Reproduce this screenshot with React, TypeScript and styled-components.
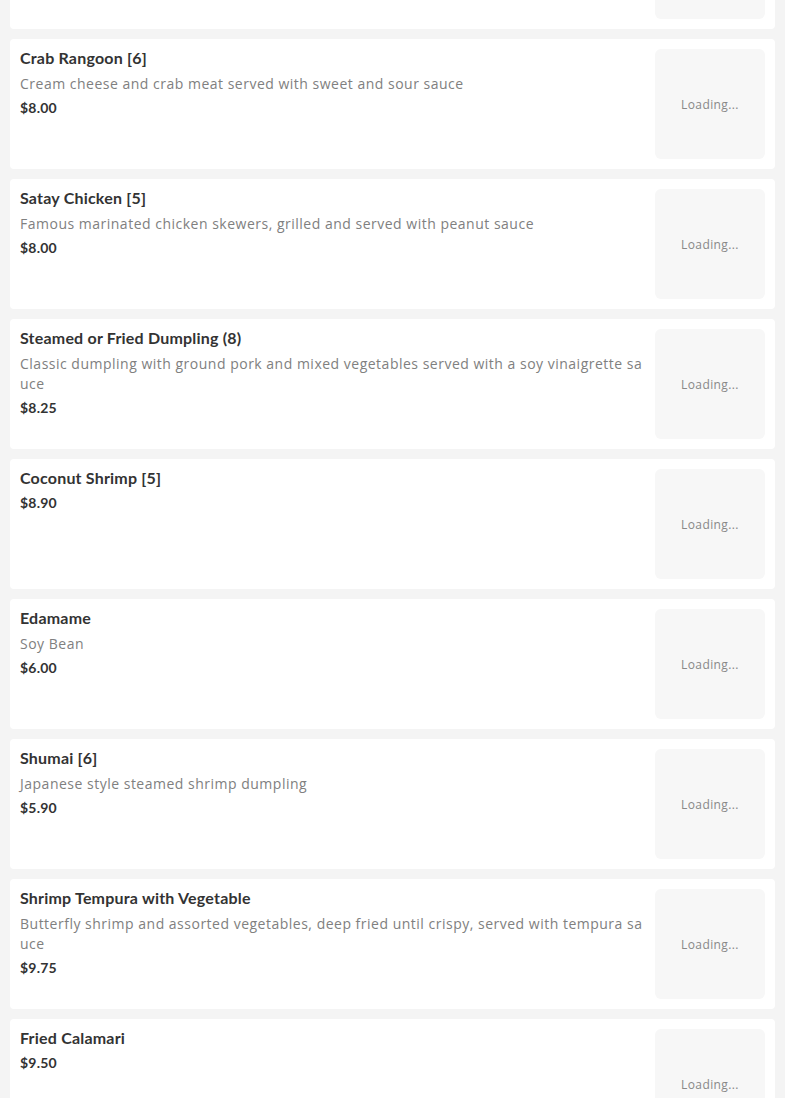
import styled, { createGlobalStyle } from 'styled-components';

interface MenuItemType {
  name: string;
  description?: string;
  price: number;
}

const menuItems: MenuItemType[] = [
  { name: 'Spring Roll [2]', description: 'Crispy rolls with vegetables served with sweet and sour sauce', price: 4.5 },
  { name: 'Crab Rangoon [6]', description: 'Cream cheese and crab meat served with sweet and sour sauce', price: 8 },
  { name: 'Satay Chicken [5]', description: 'Famous marinated chicken skewers, grilled and served with peanut sauce', price: 8 },
  {
    name: 'Steamed or Fried Dumpling (8)',
    description: 'Classic dumpling with ground pork and mixed vegetables served with a soy vinaigrette sauce',
    price: 8.25,
  },
  { name: 'Coconut Shrimp [5]', price: 8.9 },
  { name: 'Edamame', description: 'Soy Bean', price: 6 },
  { name: 'Shumai [6]', description: 'Japanese style steamed shrimp dumpling', price: 5.9 },
  {
    name: 'Shrimp Tempura with Vegetable',
    description: 'Butterfly shrimp and assorted vegetables, deep fried until crispy, served with tempura sauce',
    price: 9.75,
  },
  { name: 'Fried Calamari', price: 9.5 },
];

const MenuItem = ({ item }: { item: MenuItemType }) => (
  <StyledItem.Card>
    <StyledItem.Info>
      <StyledItem.Name>{item.name}</StyledItem.Name>
      {item.description && <StyledItem.Description>{item.description}</StyledItem.Description>}
      <StyledItem.Price>${item.price.toFixed(2)}</StyledItem.Price>
    </StyledItem.Info>
    <StyledItem.Thumb>Loading...</StyledItem.Thumb>
  </StyledItem.Card>
);

const App = () => {
  return (
    <>
      <GlobalStyle />
      <StyledList>
        {menuItems.map((item) => (
          <MenuItem key={item.name} item={item} />
        ))}
      </StyledList>
    </>
  );
};

const GlobalStyle = createGlobalStyle`
  html, body {
    margin: 0;
    padding: 0;
    background-color: #f4f4f4;
    overflow: hidden;
  }

  * {
    box-sizing: border-box;
  }
`;

// page is shown scrolled: first card sits mostly above the fold
const StyledList = styled.div`
  display: flex;
  flex-direction: column;
  gap: 10px;
  margin-top: -101px;
  padding: 0 10px;
`;

const StyledItem = {
  Card: styled.div`
    display: flex;
    gap: 10px;
    height: 130px;
    padding: 10px;
    background-color: #fff;
    border-radius: 4px;
  `,

  Info: styled.div`
    flex: 1;
    min-width: 0;
  `,

  Name: styled.h3`
    margin: 0 0 7px;
    color: #333;
    font-family: Lato, 'Open Sans', sans-serif;
    font-size: 16px;
    font-weight: 700;
    line-height: 18px;
    letter-spacing: 0.2px;
  `,

  Description: styled.p`
    margin: 0 0 5px;
    color: #808080;
    font-family: 'Open Sans', sans-serif;
    font-size: 14px;
    font-weight: 400;
    line-height: 20px;
    letter-spacing: 0.5px;
    word-break: break-all;
  `,

  Price: styled.p`
    margin: 0;
    color: #333;
    font-family: Lato, sans-serif;
    font-size: 14px;
    font-weight: 700;
    line-height: 18px;
    letter-spacing: 0.2px;
  `,

  Thumb: styled.div`
    display: flex;
    justify-content: center;
    align-items: center;
    width: 110px;
    height: 110px;
    flex-shrink: 0;
    border-radius: 6px;
    background-color: #f7f7f7;
    color: #888;
    font-family: 'Open Sans', sans-serif;
    font-size: 12px;
    font-weight: 400;
    letter-spacing: 0.4px;
  `,
};

export default App;
